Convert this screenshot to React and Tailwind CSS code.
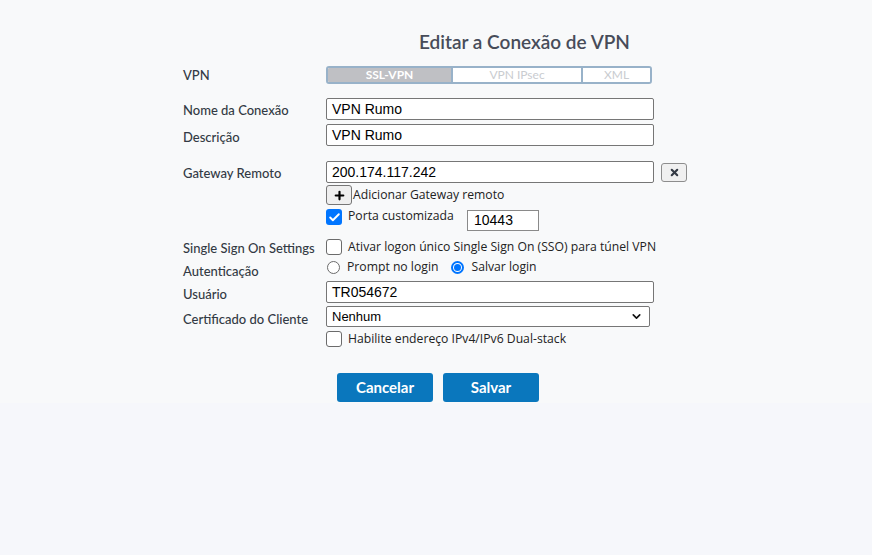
import React from "react";
import { X, Plus, Check, ChevronDown } from "lucide-react";

const lato = { fontFamily: "Lato, 'Liberation Sans', sans-serif" };

const Label = ({ children, className = "" }) => (
  <div className={`w-[143px] shrink-0 text-[13px] leading-[16px] font-medium text-[#333a44] ${className}`} style={lato}>
    {children}
  </div>
);

const TextInput = ({ value, className = "w-[328px]" }) => (
  <div
    className={`${className} h-[22px] bg-white border border-[#767676] rounded-[2px] px-[5px] flex items-center text-[14px] text-black font-['Liberation_Sans',Arial,sans-serif]`}
  >
    {value}
  </div>
);

const Checkbox = ({ checked }) =>
  checked ? (
    <div className="w-4 h-4 rounded-[3px] bg-[#0075ff] flex items-center justify-center shrink-0">
      <Check size={13} color="white" strokeWidth={3.5} />
    </div>
  ) : (
    <div className="w-4 h-4 rounded-[3px] bg-white border border-[#6b6b6b] shrink-0" />
  );

const Radio = ({ checked }) =>
  checked ? (
    <div className="w-[13px] h-[13px] rounded-full border-2 border-[#0075ff] bg-white flex items-center justify-center shrink-0">
      <div className="w-[7px] h-[7px] rounded-full bg-[#0075ff]" />
    </div>
  ) : (
    <div className="w-[13px] h-[13px] rounded-full border border-[#6b6b6b] bg-white shrink-0" />
  );

const optText = "text-[12.2px] leading-[16px] text-[#222] font-['Open_Sans','Noto_Sans',sans-serif]";

export default function App() {
  return (
    <div className="min-h-[555px] bg-[#f6f7fb]">
      <div className="bg-[#f8f9fa] pb-px">
        <div className="w-[506px] mx-auto flex flex-col">
          {/* Título */}
          <div className="mt-[30px] h-[24px] pl-[236px] text-[19px] font-semibold text-[#474c59] leading-[24px]" style={lato}>
            Editar a Conexão de VPN
          </div>

          {/* VPN */}
          <div className="mt-[12px] h-[18px] flex items-center">
            <Label>VPN</Label>
            <div className="flex w-[326px] h-[18px] border-2 border-[#98b2c9] rounded-[3px] overflow-hidden text-[12px] font-bold leading-none" style={lato}>
              <div className="w-[123px] bg-[#bfc0c4] text-white flex items-center justify-center">SSL-VPN</div>
              <div className="w-[130px] bg-white text-[#c9ccd0] font-normal flex items-center justify-center border-l-2 border-[#98b2c9]">VPN IPsec</div>
              <div className="flex-1 bg-white text-[#c9ccd0] font-normal flex items-center justify-center border-l-2 border-[#98b2c9]">XML</div>
            </div>
          </div>

          {/* Nome da Conexão */}
          <div className="mt-[14px] flex items-center">
            <Label className="pt-[2px]">Nome da Conexão</Label>
            <TextInput value="VPN Rumo" />
          </div>

          {/* Descrição */}
          <div className="mt-[4px] flex items-center">
            <Label className="pt-[4px]">Descrição</Label>
            <TextInput value="VPN Rumo" />
          </div>

          {/* Gateway Remoto */}
          <div className="mt-[15px] flex items-center">
            <Label className="pt-[1px]">Gateway Remoto</Label>
            <TextInput value="200.174.117.242" />
            <button className="ml-[7px] w-[26px] h-[19px] bg-[#f0f0f0] border border-[#8d8d8d] rounded-[3px] flex items-center justify-center">
              <X size={11} strokeWidth={4.5} color="#333a44" />
            </button>
          </div>

          {/* Adicionar Gateway */}
          <div className="mt-[2px] h-[20px] flex items-center">
            <Label />
            <button className="w-[26px] h-[20px] bg-[#efefef] border border-[#767676] rounded-[3px] flex items-center justify-center">
              <Plus size={13} strokeWidth={4} color="#000" />
            </button>
            <span className={`ml-px ${optText}`}>Adicionar Gateway remoto</span>
          </div>

          {/* Porta customizada */}
          <div className="mt-[4px] h-[22px] flex items-start">
            <Label />
            <Checkbox checked />
            <span className={`ml-[6px] -mt-[1px] w-[119px] ${optText}`}>Porta customizada</span>
            <div className="mt-[1px] w-[72px] h-[21px] bg-white border border-[#8a8a8a] px-[6px] flex items-center text-[14px] text-black font-['Liberation_Sans',Arial,sans-serif]">
              10443
            </div>
          </div>

          {/* SSO */}
          <div className="mt-[8px] h-[16px] flex items-center">
            <Label className="relative top-[1px]">Single Sign On Settings</Label>
            <Checkbox />
            <span className={`ml-[6px] ${optText}`}>Ativar logon único Single Sign On (SSO) para túnel VPN</span>
          </div>

          {/* Autenticação */}
          <div className="mt-[4px] h-[16px] flex items-center">
            <Label className="relative top-[4px]">Autenticação</Label>
            <div className="ml-[1px] flex items-center gap-[7px]">
              <Radio />
              <span className={optText}>Prompt no login</span>
            </div>
            <div className="ml-[13px] flex items-center gap-[7px]">
              <Radio checked />
              <span className={optText}>Salvar login</span>
            </div>
          </div>

          {/* Usuário */}
          <div className="mt-[6px] flex items-center">
            <Label className="pt-[3px]">Usuário</Label>
            <TextInput value="TR054672" />
          </div>

          {/* Certificado do Cliente */}
          <div className="mt-[3px] flex items-center">
            <Label className="pt-[4px]">Certificado do Cliente</Label>
            <div className="w-[324px] h-[21px] bg-white border border-[#767676] rounded-[2px] pl-[5px] pr-[6px] flex items-center justify-between text-[13px] text-black font-['Liberation_Sans',Arial,sans-serif]">
              <span>Nenhum</span>
              <ChevronDown size={13} strokeWidth={3} color="#111" />
            </div>
          </div>

          {/* Dual-stack */}
          <div className="mt-[4px] h-[16px] flex items-center">
            <Label />
            <Checkbox />
            <span className={`ml-[6px] ${optText}`}>Habilite endereço IPv4/IPv6 Dual-stack</span>
          </div>

          {/* Botões */}
          <div className="mt-[26px] flex gap-[10px] pl-[154px]">
            <button className="w-[96px] h-[29px] bg-[#0a77bd] rounded-[3px] text-white text-[15px] font-bold" style={lato}>
              Cancelar
            </button>
            <button className="w-[96px] h-[29px] bg-[#0a77bd] rounded-[3px] text-white text-[15px] font-bold" style={lato}>
              Salvar
            </button>
          </div>
        </div>
      </div>
    </div>
  );
}
